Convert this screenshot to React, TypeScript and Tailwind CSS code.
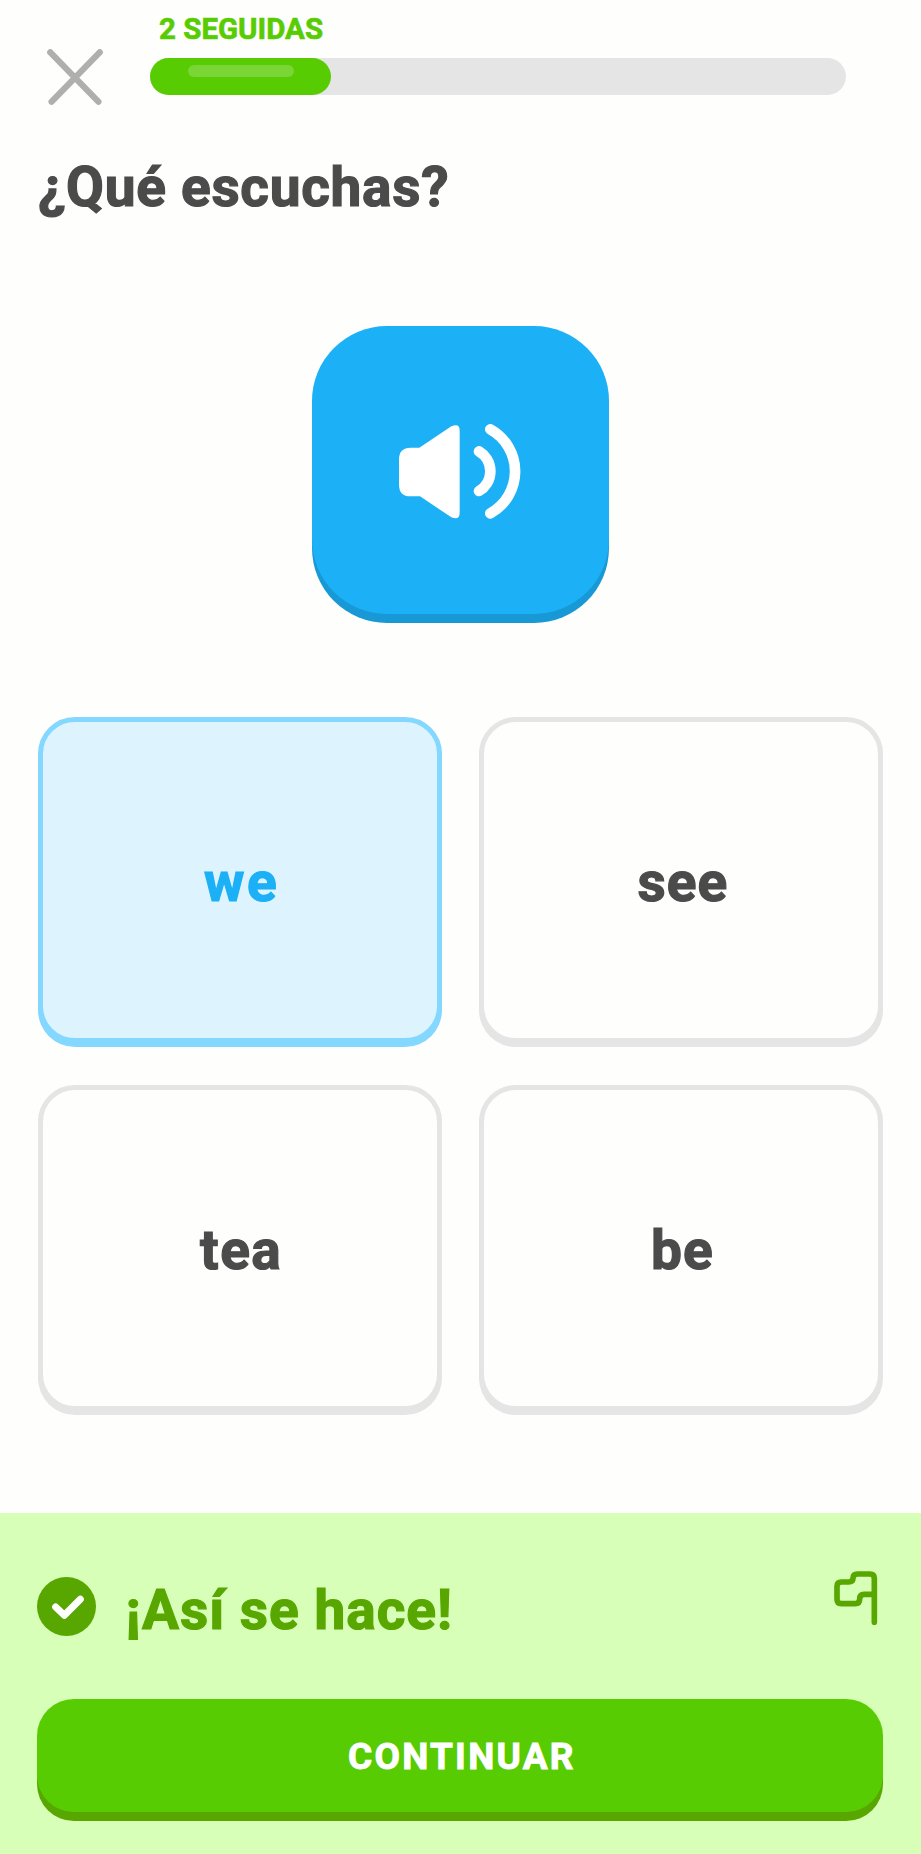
import React from "react";

type Option = { word: string; selected?: boolean; spacing: string };

const options: Option[] = [
  { word: "we", selected: true, spacing: "tracking-[2.500px] pl-1" },
  { word: "see", spacing: "tracking-[1px] pl-[3px]" },
  { word: "tea", spacing: "tracking-[1.500px] pl-[3px]" },
  { word: "be", spacing: "tracking-[1px] pl-0.5" },
];

function CloseIcon() {
  return (
    <svg className="h-14 w-14" viewBox="141 148 168 168" fill="none" stroke="#afafaf" strokeWidth="19" strokeLinecap="round">
      <path d="M151 158L295 306M299 158L155 306" />
    </svg>
  );
}

function SpeakerIcon() {
  return (
    <svg className="h-[95px] w-[122px]" viewBox="327 342 366 285" fill="none">
      <path
        fill="#fff"
        d="M388 413L484 349Q509 338 509 362V608Q509 632 484 622L390 559H362Q327 559 327 524V448Q327 413 362 413Z"
      />
      <g stroke="#fff" strokeWidth="32" strokeLinecap="round">
        <path d="M567 424A69 69 0 0 1 567 543" />
        <path d="M601 358A144 144 0 0 1 601 610" />
      </g>
    </svg>
  );
}

function CheckIcon() {
  return (
    <svg className="h-[59px] w-[59px]" viewBox="112 231 177 177" fill="none">
      <circle cx="200.5" cy="319.5" r="88.5" fill="#58a700" />
      <path d="M168 321L194 346L242 298" stroke="#fff" strokeWidth="21" strokeLinecap="round" strokeLinejoin="round" />
    </svg>
  );
}

function FlagIcon() {
  return (
    <svg className="h-[54px] w-[44px]" viewBox="70 62 132 162" fill="none" stroke="#58a700" strokeWidth="17" strokeLinecap="round" strokeLinejoin="round">
      <path d="M191 216V84Q191 71 178 71H140Q127 71 127 84Q127 95 114 95H92Q79 95 79 108V147Q79 160 92 160H134Q147 160 147 146Q147 132 160 132H191" />
    </svg>
  );
}

function OptionCard({ word, selected, spacing }: Option) {
  const tone = selected
    ? "border-[#84d8ff] bg-[#ddf4ff] text-[#1cb0f6] shadow-[0_4px_0_#84d8ff]"
    : "border-[#e5e5e5] bg-[#fefefd] text-[#4b4b4b] shadow-[0_4px_0_#e5e5e5]";
  return (
    <button className={`flex h-[326px] items-center justify-center rounded-[37px] border-[5px] pt-1 text-[55px] leading-none font-bold [-webkit-text-stroke:1.2px_currentColor] ${spacing} ${tone}`}>
      {word}
    </button>
  );
}

export default function App() {
  return (
    <main className="flex h-[1854px] w-[921px] flex-col bg-[#fefefd] font-['Roboto',sans-serif] text-[#4b4b4b]">
      <header className="flex h-[110px] pl-[47px]">
        <button className="mt-[49px] h-14 w-14" aria-label="Cerrar">
          <CloseIcon />
        </button>
        <div className="ml-[47px] w-[695.500px] pt-3">
          <p className="h-[46px] pl-[9px] text-[29.500px] leading-[34px] font-bold whitespace-nowrap text-[#58cc02] [-webkit-text-stroke:0.6px_currentColor]">
            2 SEGUIDAS
          </p>
          <div className="h-[37px] rounded-full bg-[#e5e5e5]">
            <div className="flex h-[37px] w-[181px] justify-center rounded-full bg-[#58cc02] pt-[7px]">
              <div className="h-3 w-[106px] rounded-full bg-[#79d635]" />
            </div>
          </div>
        </div>
      </header>

      <h1 className="mt-[45px] h-16 pl-[38px] text-[55px] leading-[64px] font-bold tracking-[0.700px] whitespace-nowrap [-webkit-text-stroke:1.2px_currentColor]">
        ¿Qué escuchas?
      </h1>

      <button className="mx-auto mt-[107px] flex h-[288px] w-[297px] items-center justify-center rounded-[75px] bg-[#1cb0f6] pt-0.5 pr-0.5 shadow-[0_9px_0_#1899d6]" aria-label="Escuchar">
        <SpeakerIcon />
      </button>

      <section className="mt-[103px] mr-[37.700px] ml-[37.600px] grid grid-cols-2 gap-x-[37.500px] gap-y-[42px]">
        {options.map((o) => (
          <OptionCard key={o.word} {...o} />
        ))}
      </section>

      <footer className="mt-auto h-[341px] bg-[#d7ffb8] pr-[37.700px] pl-[37.400px]">
        <div className="flex h-[186px]">
          <div className="pt-16">
            <CheckIcon />
          </div>
          <h2 className="mt-[65px] ml-[29px] flex-1 text-[55px] leading-[64px] font-bold tracking-[1px] whitespace-nowrap text-[#58a700] [-webkit-text-stroke:1.2px_currentColor]">
            ¡Así se hace!
          </h2>
          <div className="mr-[5px] pt-[58px]">
            <FlagIcon />
          </div>
        </div>
        <button className="flex h-[113px] w-full items-center justify-center rounded-[37px] bg-[#58cc02] pt-px pl-[3px] text-[37px] leading-none font-bold tracking-[2.200px] text-white shadow-[0_9px_0_#58a700] [-webkit-text-stroke:0.9px_currentColor]">
          CONTINUAR
        </button>
      </footer>
    </main>
  );
}
